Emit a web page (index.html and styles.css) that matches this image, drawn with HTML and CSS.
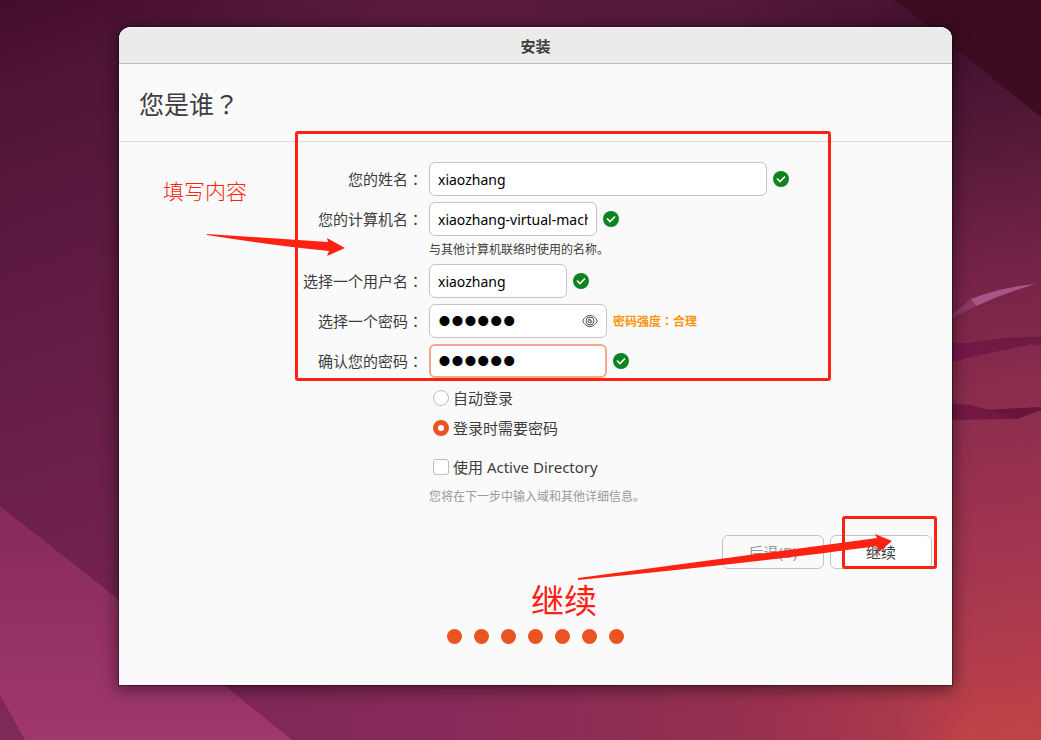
FILE: index.html
```html
<!DOCTYPE html>
<html lang="zh-CN">
<head>
<meta charset="utf-8">
<meta name="viewport" content="width=device-width, initial-scale=1">
<title>安装</title>
<link rel="stylesheet" href="styles.css">
</head>
<body>
<svg class="wallpaper" viewBox="0 0 1041 740" preserveAspectRatio="none" aria-hidden="true">
  <defs>
    <linearGradient id="base" gradientUnits="userSpaceOnUse" x1="0" y1="0" x2="210" y2="600">
      <stop offset="0" stop-color="#430b2c"/><stop offset=".15" stop-color="#501537"/><stop offset=".4" stop-color="#5d1a40"/><stop offset="1" stop-color="#762450"/>
    </linearGradient>
    <linearGradient id="top" gradientUnits="userSpaceOnUse" x1="200" y1="0" x2="950" y2="0">
      <stop offset="0" stop-color="#591b3e" stop-opacity="0"/><stop offset=".3" stop-color="#5b1b3e"/><stop offset=".7" stop-color="#55193a"/><stop offset="1" stop-color="#43102d"/>
    </linearGradient>
    <linearGradient id="right" gradientUnits="userSpaceOnUse" x1="930" y1="50" x2="1041" y2="740">
      <stop offset="0" stop-color="#421130"/><stop offset=".15" stop-color="#561a38"/><stop offset=".32" stop-color="#742346"/><stop offset=".5" stop-color="#8b2c4e"/><stop offset=".75" stop-color="#a4364f"/><stop offset="1" stop-color="#c04347"/>
    </linearGradient>
    <linearGradient id="bottom" gradientUnits="userSpaceOnUse" x1="230" y1="0" x2="970" y2="0">
      <stop offset="0" stop-color="#7f2757"/><stop offset=".3" stop-color="#872a59"/><stop offset=".7" stop-color="#97304f"/><stop offset=".9" stop-color="#a9384c"/><stop offset="1" stop-color="#ae3a4c" stop-opacity="0"/>
    </linearGradient>
    <linearGradient id="pink" x1="0" y1="0" x2="0" y2="1">
      <stop offset="0" stop-color="#872a5b"/><stop offset="1" stop-color="#a0376f"/>
    </linearGradient>
  </defs>
  <rect width="1041" height="740" fill="url(#base)"/>
  <rect x="200" width="841" height="300" fill="url(#top)"/>
  <rect x="900" y="35" width="141" height="705" fill="url(#right)"/>
  <rect x="200" y="640" width="770" height="100" fill="url(#bottom)"/>
  <path d="M895 0H1041V117Z" fill="#3c0c21"/>
  <path d="M0 506L119 600L224 685L292 740H0Z" fill="url(#pink)"/>
  <path d="M0 695L25 740H0Z" fill="#7d2a58"/>
  <path d="M940 324L971 299L976 306L940 324Z" fill="#8a3867"/>
  <path d="M971 299Q1001 287 1036 284Q1004 293 976 306Z" fill="#aa5585"/>
  <path d="M940 343H970Q1003 337 1041 337V345L1031 344L1004 350Q970 357 952 362H940Z" fill="#74184a"/>
  <path d="M970 343Q1003 337 1041 337V345L1031 344L1004 350Z" fill="#711a40"/>
  <path d="M940 402L970 405L990 410L1041 407V410L1017 419L940 420Z" fill="#731843"/>
  <path d="M988 410L1041 407V410L1017 419Z" fill="#681637"/>
</svg>

<main class="window">
  <header class="titlebar">安装</header>
  <h1 class="heading">您是谁<span class="centered" lang="zh-TW">？</span></h1>

  <form class="form">
    <div class="fields">
      <label class="label" for="name">您的姓名<span class="centered" lang="zh-TW">：</span></label>
      <div class="control">
        <input class="entry entry-name" id="name" type="text" value="xiaozhang">
        <svg class="check" viewBox="0 0 16 16" role="img" aria-label="有效"><circle cx="8" cy="8" r="8"/><path d="M4 7.500L7 10.500L12 5.500"/></svg>
      </div>
      <label class="label" for="host">您的计算机名<span class="centered" lang="zh-TW">：</span></label>
      <div class="control">
        <input class="entry entry-host" id="host" type="text" value="xiaozhang-virtual-machine">
        <svg class="check" viewBox="0 0 16 16" role="img" aria-label="有效"><circle cx="8" cy="8" r="8"/><path d="M4 7.500L7 10.500L12 5.500"/></svg>
      </div>
      <p class="note">与其他计算机联络时使用的名称。</p>
      <label class="label" for="user">选择一个用户名<span class="centered" lang="zh-TW">：</span></label>
      <div class="control">
        <input class="entry entry-user" id="user" type="text" value="xiaozhang">
        <svg class="check" viewBox="0 0 16 16" role="img" aria-label="有效"><circle cx="8" cy="8" r="8"/><path d="M4 7.500L7 10.500L12 5.500"/></svg>
      </div>
      <label class="label" for="pass">选择一个密码<span class="centered" lang="zh-TW">：</span></label>
      <div class="control">
        <div class="entry entry-pass reveal-box">
          <input class="secret" id="pass" type="password" value="secret">
          <button class="reveal" type="button" aria-label="显示密码">
            <svg viewBox="0 0 16 14"><path d="M.7 7C2.200 3.500 4.800 1.500 8 1.500S13.800 3.500 15.300 7C13.800 10.500 11.200 12.500 8 12.500S2.200 10.500 .7 7Z"/><circle cx="8" cy="7" r="4"/><path d="M8 5A2 2 0 1 0 10 7H8Z"/></svg>
          </button>
        </div>
        <span class="strength">密码强度<span class="centered" lang="zh-TW">：</span>合理</span>
      </div>
      <label class="label" for="confirm">确认您的密码<span class="centered" lang="zh-TW">：</span></label>
      <div class="control">
        <input class="entry entry-pass secret focused" id="confirm" type="password" value="secret">
        <svg class="check" viewBox="0 0 16 16" role="img" aria-label="有效"><circle cx="8" cy="8" r="8"/><path d="M4 7.500L7 10.500L12 5.500"/></svg>
      </div>
    </div>

    <div class="options">
      <label class="option"><input class="radio" type="radio" name="login">自动登录</label>
      <label class="option"><input class="radio" type="radio" name="login" checked>登录时需要密码</label>
      <label class="option option-directory"><input class="box" type="checkbox">使用 Active Directory</label>
      <p class="note note-dim">您将在下一步中输入域和其他详细信息。</p>
    </div>

    <div class="actions">
      <button class="button" type="button" disabled>后退(B)</button>
      <button class="button" type="submit">继续</button>
    </div>
  </form>

  <div class="dots" aria-hidden="true"><i class="dot"></i><i class="dot"></i><i class="dot"></i><i class="dot"></i><i class="dot"></i><i class="dot"></i><i class="dot"></i></div>

  <div class="frame frame-fields"></div>
  <div class="frame frame-continue"></div>
  <span class="callout callout-fields">填写内容</span>
  <span class="callout callout-continue">继续</span>
  <svg class="arrow arrow-fields" viewBox="0 0 140 24" aria-hidden="true"><path d="M0 0L121 8L120 4L138 14L120 22L122 17Q70 12 0 1Z"/></svg>
  <svg class="arrow arrow-continue" viewBox="0 0 316 48" aria-hidden="true"><path d="M0 44L299 4L297 0L314 7L301 18L299 12Q200 26 0 46Z"/></svg>
</main>
</body>
</html>
```
FILE: styles.css
```css
* { box-sizing: border-box; }

body {
  margin: 0;
  min-height: 100vh;
  padding: 27px 89px 55px 119px;
  display: flex;
  background: #5a1a40;
  color: #3d3d3d;
  font: 15px/20px "Noto Sans", "Noto Sans CJK SC", sans-serif;
}

input, button { font: inherit; color: inherit; margin: 0; }

.wallpaper {
  position: absolute;
  inset: 0;
  width: 100%;
  height: 100%;
}

.window {
  position: relative;
  flex: 1;
  display: flex;
  flex-direction: column;
  background: #fafafa;
  border-radius: 12px 12px 0 0;
  box-shadow: 0 0 0 1px rgba(0, 0, 0, .35), 0 3px 16px 2px rgba(0, 0, 0, .45);
}

.titlebar {
  height: 37px;
  border-bottom: 1px solid #bfbfbf;
  border-radius: 12px 12px 0 0;
  background: #ebebeb;
  box-shadow: inset 0 1px #f8f8f8;
  font-weight: 700;
  line-height: 38px;
  text-align: center;
}

.heading {
  margin: 0;
  padding: 2px 20px 0;
  border-bottom: 1px solid #dcdcdc;
  font-size: 25px;
  font-weight: 400;
  line-height: 74px;
}

.form { padding: 20px 20px 0 184px; }

.fields {
  display: grid;
  grid-template-columns: 120px 1fr;
  gap: 6px;
  align-items: center;
}

.label { text-align: right; white-space: nowrap; }
.centered { font-family: "Noto Sans CJK TC", sans-serif; }

.control { display: flex; align-items: center; gap: 6px; }

.entry {
  height: 34px;
  padding: 0 8px;
  border: 1px solid #c4c4c4;
  border-radius: 6px;
  background: #fff;
  color: #000;
  font-size: 14px;
  outline: none;
}
.entry-name { width: 338px; }
.entry-host { width: 168px; }
.entry-user { width: 138px; }
.entry-pass { width: 178px; }

.secret { font: 37px/32px "Liberation Sans", sans-serif; color: #000; }
.focused { border: 2px solid #f3a78d; padding: 0 7px; }

.reveal-box { display: flex; align-items: center; }
.reveal-box .secret {
  flex: 1;
  min-width: 0;
  height: 32px;
  padding: 0;
  border: 0;
  background: none;
  outline: none;
}
.reveal { display: flex; padding: 0; border: 0; background: none; }
.reveal svg {
  width: 16px;
  height: 14px;
  fill: none;
  stroke: #555;
}

.check { width: 16px; height: 16px; fill: #0e8420; }
.check path { fill: none; stroke: #fff; stroke-width: 1.6; }

.strength { color: #ff9410; font-size: 12px; font-weight: 700; }

.note {
  grid-column: 2;
  margin: 0;
  font-size: 12px;
  line-height: 16px;
}
.note-dim { margin-top: 7px; color: #999; }

.options { padding: 5px 0 0 126px; }
.option {
  display: flex;
  align-items: center;
  gap: 4px;
  height: 30px;
  padding-left: 4px;
}
.option-directory { margin-top: 9px; }

.radio, .box {
  appearance: none;
  width: 16px;
  height: 16px;
  border: 1px solid #bdbdbd;
  background: #fff;
}
.radio { border-radius: 50%; }
.radio:checked { border: 5px solid #e95420; }
.box { border-radius: 3px; }

.actions {
  display: flex;
  justify-content: flex-end;
  gap: 6px;
  padding-top: 30px;
}
.button {
  width: 102px;
  height: 34px;
  padding: 0;
  border: 1px solid #c4c4c4;
  border-radius: 6px;
  background: #fff;
}
.button:disabled { background: #fafafa; color: #999; }

.dots {
  display: flex;
  justify-content: center;
  gap: 12px;
  padding: 60px 0 41px;
}
.dot {
  width: 15px;
  height: 15px;
  border-radius: 50%;
  background: #e95420;
}

.frame {
  position: absolute;
  border: 3px solid #ff2112;
  border-radius: 3px;
  pointer-events: none;
}
.frame-fields { left: 176px; top: 104px; width: 536px; height: 250px; }
.frame-continue { right: 15px; top: 489px; width: 95px; height: 53px; }

.callout {
  position: absolute;
  color: #ff2112;
  white-space: nowrap;
}
.callout-fields { left: 44px; top: 149px; font-size: 21px; line-height: 30px; font-weight: 300; }
.callout-continue { left: 412px; top: 552px; font-size: 33px; line-height: 44px; }

.arrow { position: absolute; fill: #ff2112; pointer-events: none; }
.arrow-fields { left: 88px; top: 207px; width: 140px; height: 24px; }
.arrow-continue { left: 459px; top: 507px; width: 316px; height: 48px; }
```
